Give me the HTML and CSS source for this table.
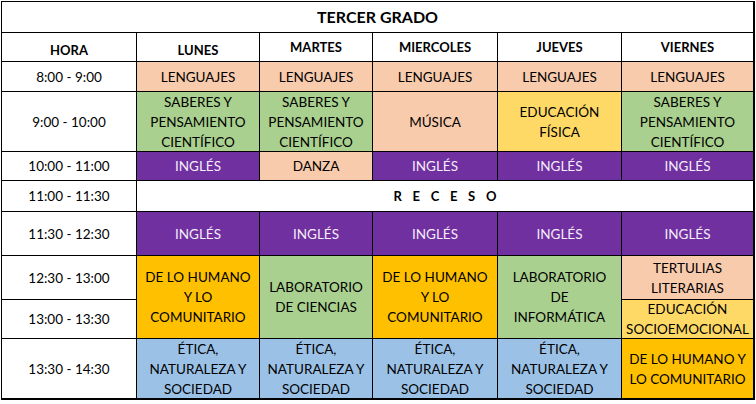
FILE: index.html
```html
<!DOCTYPE html>
<html lang="es">
<head>
<meta charset="utf-8">
<title>Tercer grado</title>
<link rel="stylesheet" href="styles.css">
</head>
<body>
<div class="sheet">
  <div class="cell title">TERCER GRADO</div>

  <div class="cell head bottom">HORA</div>
  <div class="cell head bottom">LUNES</div>
  <div class="cell head">MARTES</div>
  <div class="cell head">MIERCOLES</div>
  <div class="cell head">JUEVES</div>
  <div class="cell head">VIERNES</div>

  <div class="cell">8:00 - 9:00</div>
  <div class="cell peach">LENGUAJES</div>
  <div class="cell peach">LENGUAJES</div>
  <div class="cell peach">LENGUAJES</div>
  <div class="cell peach">LENGUAJES</div>
  <div class="cell peach">LENGUAJES</div>

  <div class="cell">9:00 - 10:00</div>
  <div class="cell green">SABERES Y<br>PENSAMIENTO<br>CIENTÍFICO</div>
  <div class="cell green">SABERES Y<br>PENSAMIENTO<br>CIENTÍFICO</div>
  <div class="cell peach">MÚSICA</div>
  <div class="cell yellow">EDUCACIÓN<br>FÍSICA</div>
  <div class="cell green">SABERES Y<br>PENSAMIENTO<br>CIENTÍFICO</div>

  <div class="cell">10:00 - 11:00</div>
  <div class="cell purple">INGLÉS</div>
  <div class="cell peach">DANZA</div>
  <div class="cell purple">INGLÉS</div>
  <div class="cell purple">INGLÉS</div>
  <div class="cell purple">INGLÉS</div>

  <div class="cell">11:00 - 11:30</div>
  <div class="cell recess"><span class="spaced">R E C E S O</span></div>

  <div class="cell">11:30 - 12:30</div>
  <div class="cell purple">INGLÉS</div>
  <div class="cell purple">INGLÉS</div>
  <div class="cell purple">INGLÉS</div>
  <div class="cell purple">INGLÉS</div>
  <div class="cell purple">INGLÉS</div>

  <div class="cell">12:30 - 13:00</div>
  <div class="cell gold span2">DE LO HUMANO<br>Y LO<br>COMUNITARIO</div>
  <div class="cell green span2">LABORATORIO<br>DE CIENCIAS</div>
  <div class="cell gold span2">DE LO HUMANO<br>Y LO<br>COMUNITARIO</div>
  <div class="cell green span2">LABORATORIO<br>DE<br>INFORMÁTICA</div>
  <div class="cell peach">TERTULIAS<br>LITERARIAS</div>

  <div class="cell">13:00 - 13:30</div>
  <div class="cell yellow">EDUCACIÓN<br>SOCIOEMOCIONAL</div>

  <div class="cell">13:30 - 14:30</div>
  <div class="cell blue">ÉTICA,<br>NATURALEZA Y<br>SOCIEDAD</div>
  <div class="cell blue">ÉTICA,<br>NATURALEZA Y<br>SOCIEDAD</div>
  <div class="cell blue">ÉTICA,<br>NATURALEZA Y<br>SOCIEDAD</div>
  <div class="cell blue">ÉTICA,<br>NATURALEZA Y<br>SOCIEDAD</div>
  <div class="cell gold">DE LO HUMANO Y<br>LO COMUNITARIO</div>
</div>
</body>
</html>
```

FILE: styles.css
```css
html, body {
  margin: 0;
  padding: 0;
  background: #ffffff;
}

body {
  padding: 1px 0 0 1px;
  font-family: Lato, "Liberation Sans", sans-serif;
  font-size: 13.5px;
  color: #000000;
}

.sheet {
  display: grid;
  grid-template-columns: 134px 122px 112px 124px 123px 131px;
  grid-template-rows: 30px 28px 29px 59px 28px 30px 43px 43px 38px 59px;
  gap: 1px;
  padding: 1px 2px 2px 1px;
  background: #000000;
  width: max-content;
}

.cell {
  background: #ffffff;
  display: flex;
  align-items: center;
  justify-content: center;
  text-align: center;
  line-height: 20px;
  white-space: nowrap;
  overflow: visible;
}

.title {
  grid-column: 1 / -1;
  font-weight: 700;
  font-size: 16px;
}

.head {
  font-weight: 700;
  font-size: 13px;
}

.head.bottom {
  align-items: flex-end;
  padding-bottom: 1px;
}

.recess {
  grid-column: span 5;
}

.spaced {
  font-weight: 700;
  font-size: 13px;
  word-spacing: 7.5px;
}

.span2 {
  grid-row: span 2;
}

.peach { background: #f8cbad; }
.green { background: #a9d08e; }
.yellow { background: #ffd966; }
.gold { background: #ffc000; }
.blue { background: #9bc2e6; }
.purple {
  background: #7030a0;
  color: #f4eefa;
}
```
